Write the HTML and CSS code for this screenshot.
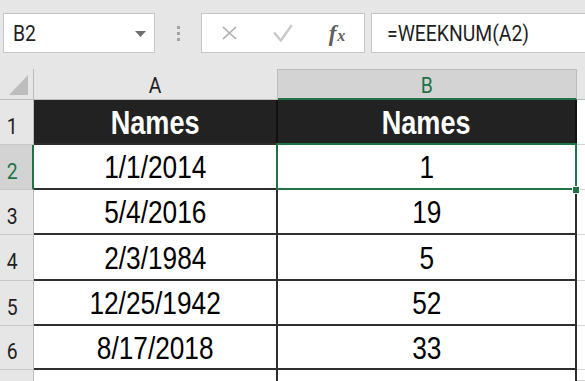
FILE: index.html
```html
<!DOCTYPE html>
<html lang="en">
<head>
    <meta charset="UTF-8">
    <meta name="viewport" content="width=device-width, initial-scale=1.0">
    <title>WEEKNUM - Sheet</title>
    <link rel="stylesheet" href="styles.css">
</head>
<body>
    <div class="toolbar">
        <div class="namebox">
            <span class="ui-text">B2</span>
            <svg class="dropdown" width="11" height="6" viewBox="0 0 11 6"><path d="M0 0h11L5.5 6z" fill="#6f6f6f"/></svg>
        </div>
        <div class="dots"><i></i><i></i><i></i></div>
        <div class="buttons">
            <span class="btn">
                <svg width="17" height="14" viewBox="0 0 17 14"><path d="M2 1l13 12M15 1L2 13" stroke="#aeaeae" stroke-width="1.7" fill="none"/></svg>
            </span>
            <span class="btn">
                <svg width="20" height="18" viewBox="0 0 20 18"><path d="M1 8.5l6.8 8L18.8 1" stroke="#c9c9c9" stroke-width="2.4" fill="none"/></svg>
            </span>
            <span class="btn fx"><i class="f">f</i><i class="x">x</i></span>
        </div>
        <div class="formula"><span class="ui-text">=WEEKNUM(A2)</span></div>
    </div>

    <div class="sheet">
        <!-- column headers -->
        <div class="corner"><span class="tri"></span></div>
        <div class="col-head"><span class="ui-text">A</span></div>
        <div class="col-head active"><span class="ui-text">B</span></div>
        <div class="col-head rest"></div>

        <!-- row 1 -->
        <div class="row-head"><span class="ui-text">1</span></div>
        <div class="cell title"><span class="txt">Names</span></div>
        <div class="cell title"><span class="txt">Names</span></div>
        <div class="cell rest"></div>

        <!-- row 2 -->
        <div class="row-head active"><span class="ui-text">2</span></div>
        <div class="cell"><span class="txt">1/1/2014</span></div>
        <div class="cell selected"><span class="txt">1</span><span class="handle"></span></div>
        <div class="cell rest"></div>

        <!-- row 3 -->
        <div class="row-head"><span class="ui-text">3</span></div>
        <div class="cell"><span class="txt">5/4/2016</span></div>
        <div class="cell"><span class="txt">19</span></div>
        <div class="cell rest"></div>

        <!-- row 4 -->
        <div class="row-head"><span class="ui-text">4</span></div>
        <div class="cell"><span class="txt">2/3/1984</span></div>
        <div class="cell"><span class="txt">5</span></div>
        <div class="cell rest"></div>

        <!-- row 5 -->
        <div class="row-head"><span class="ui-text">5</span></div>
        <div class="cell"><span class="txt">12/25/1942</span></div>
        <div class="cell"><span class="txt">52</span></div>
        <div class="cell rest"></div>

        <!-- row 6 -->
        <div class="row-head"><span class="ui-text">6</span></div>
        <div class="cell"><span class="txt">8/17/2018</span></div>
        <div class="cell"><span class="txt">33</span></div>
        <div class="cell rest"></div>

        <!-- row 7 (cut off) -->
        <div class="row-head last"></div>
        <div class="cell empty"></div>
        <div class="cell empty"></div>
        <div class="cell rest"></div>
    </div>
</body>
</html>
```

FILE: styles.css
```css
* {
    box-sizing: border-box;
}
body {
    margin: 0;
    width: 585px;
    height: 381px;
    overflow: hidden;
    background-color: #e6e6e6;
    font-family: Roboto, "Liberation Sans", sans-serif;
}
.ui-text {
    display: inline-block;
    font-size: 22px;
    color: #1f1f1f;
    transform: scaleX(0.88);
}

/* formula bar */
.toolbar {
    height: 69px;
    padding: 13px 0 16px 3px;
    display: flex;
    align-items: stretch;
}
.namebox {
    width: 152px;
    background-color: #fff;
    border: 1px solid #c6c6c6;
    display: flex;
    align-items: center;
    justify-content: space-between;
    padding: 1px 8px 0 9px;
}
.namebox .ui-text {
    transform-origin: left center;
}
.dots {
    width: 46px;
    display: flex;
    flex-direction: column;
    align-items: center;
    justify-content: center;
    gap: 3px;
}
.dots i {
    width: 3px;
    height: 3px;
    background-color: #a2a2a2;
}
.buttons {
    width: 164px;
    background-color: #fff;
    border: 1px solid #c6c6c6;
    display: flex;
}
.btn {
    flex: 1;
    display: flex;
    align-items: center;
    justify-content: center;
}
.fx {
    font-family: "Liberation Serif", serif;
    font-weight: bold;
    color: #5e5e5e;
    padding-top: 2px;
}
.fx .f {
    font-size: 23px;
}
.fx .x {
    font-size: 16px;
    margin-left: 1px;
    padding-top: 4px;
}
.formula {
    flex: 1;
    margin-left: 6px;
    margin-right: -2px;
    background-color: #fff;
    border: 1px solid #c6c6c6;
    display: flex;
    align-items: center;
    padding: 1px 0 0 15px;
}
.formula .ui-text {
    transform-origin: left center;
}

/* grid */
.sheet {
    height: 312px;
    display: grid;
    grid-template-columns: 34px 244px 299px 1fr;
    grid-template-rows: 31px 45px 45px 45px 46px 45px 44px 1fr;
    background-color: #fff;
}
.corner {
    background-color: #e6e6e6;
    border-right: 1px solid #bcbcbc;
    border-bottom: 1px solid #bcbcbc;
    position: relative;
}
.tri {
    position: absolute;
    left: 9px;
    top: 6px;
    width: 19px;
    height: 20px;
    background-color: #bdbdbd;
    clip-path: polygon(100% 0, 100% 100%, 0 100%);
}
.col-head {
    background-color: #e6e6e6;
    border-right: 1px solid #bcbcbc;
    border-bottom: 1px solid #bcbcbc;
    display: flex;
    align-items: center;
    justify-content: center;
    padding-top: 2px;
}
.col-head.active {
    background-color: #d3d3d3;
    border-top: 1px solid #bcbcbc;
    border-bottom: 2px solid #217346;
}
.col-head.active .ui-text {
    color: #217346;
}
.col-head.rest {
    border-right: none;
}
.row-head {
    background-color: #e6e6e6;
    border-right: 1px solid #bcbcbc;
    border-bottom: 1px solid #c8c8c8;
    display: flex;
    align-items: center;
    justify-content: center;
    padding: 8px 8px 0 0;
}
.row-head.active {
    background-color: #d3d3d3;
    border-right: 2px solid #217346;
}
.row-head.active .ui-text {
    color: #217346;
}
.row-head.last {
    border-bottom: none;
}
.cell {
    border-right: 2px solid #2e2e2e;
    border-bottom: 2px solid #2e2e2e;
    display: flex;
    align-items: center;
    justify-content: center;
    padding-top: 2px;
    font-family: "Liberation Sans", Arial, sans-serif;
    font-size: 32px;
    color: #000;
}
.cell .txt {
    display: inline-block;
    transform: scaleX(0.82);
}
.cell.title {
    background-color: #222;
    border-right-color: #111;
    font-size: 33px;
    font-weight: bold;
    color: #fff;
}
.cell.empty {
    border-bottom: none;
}
.cell.rest {
    border-right: none;
    border-bottom: 1px solid #d4d4d4;
}
.cell.selected {
    position: relative;
}
.cell.selected::after {
    content: "";
    position: absolute;
    top: -2px;
    left: -2px;
    right: -2px;
    bottom: -2px;
    border: 2px solid #217346;
}
.handle {
    position: absolute;
    right: -5px;
    bottom: -6px;
    width: 8px;
    height: 8px;
    background-color: #217346;
    border: 1px solid #fff;
    z-index: 2;
}
```
